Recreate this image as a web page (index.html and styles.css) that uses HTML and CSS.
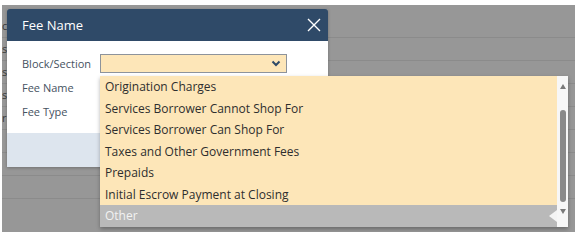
FILE: index.html
```html
<!DOCTYPE html>
<html lang="en">
<head>
    <meta charset="UTF-8">
    <title>Fee Name</title>
    <link rel="stylesheet" href="styles.css">
</head>
<body>
    <div class="screen">
        <!-- page behind the overlay -->
        <div class="page">
            <div class="pageRow"><span>c</span></div>
            <div class="pageRow"><span>s</span></div>
            <div class="pageRow"><span>s</span></div>
            <div class="pageRow"><span>s</span></div>
            <div class="pageRow"><span>r</span></div>
            <div class="pageRow"></div>
            <div class="pageRow"></div>
            <div class="pageRow"></div>
        </div>

        <div class="modal">
            <div class="modalHeader">
                <span class="modalTitle">Fee Name</span>
                <svg class="closeIcon" width="14" height="14" viewBox="0 0 14 14">
                    <path d="M1 1 L13 13 M13 1 L1 13" stroke="#ffffff" stroke-width="1.4" fill="none"/>
                </svg>
            </div>
            <div class="modalBody">
                <div class="formRow">
                    <label>Block/Section</label>
                    <div class="selectBox">
                        <svg width="10" height="7" viewBox="0 0 10 7">
                            <path d="M1.5 1.5 L5 5 L8.5 1.5" stroke="#2e4a68" stroke-width="2" fill="none"/>
                        </svg>
                    </div>
                </div>
                <div class="formRow"><label>Fee Name</label></div>
                <div class="formRow"><label>Fee Type</label></div>
            </div>
            <div class="modalFooter"></div>
        </div>

        <div class="dropdown">
            <ul class="optionList">
                <li>Origination Charges</li>
                <li>Services Borrower Cannot Shop For</li>
                <li>Services Borrower Can Shop For</li>
                <li>Taxes and Other Government Fees</li>
                <li>Prepaids</li>
                <li>Initial Escrow Payment at Closing</li>
                <li class="selected">Other<span class="notch"></span></li>
            </ul>
            <div class="scrollbar">
                <span class="arrowUp"></span>
                <span class="thumb"></span>
                <span class="arrowDown"></span>
            </div>
        </div>
    </div>
</body>
</html>
```

FILE: styles.css
```css
body {
    margin: 0;
    background-color: #ffffff;
    font-family: "Open Sans", Arial, sans-serif;
}
.screen {
    position: relative;
    margin: 5px 0 0 2px;
    width: 573px;
    height: 227px;
    background-color: #979797;
    overflow: hidden;
}
.page {
    display: flex;
    flex-direction: column;
    padding-top: 10px;
}
.pageRow {
    height: 22px;
    border-bottom: 1px solid #8b8b8b;
    font-size: 11px;
    color: #3a3a3a;
    line-height: 22px;
}
.modal {
    position: absolute;
    left: 5px;
    top: 4px;
    width: 321px;
    display: flex;
    flex-direction: column;
    box-shadow: 0 1px 3px rgba(0, 0, 0, 0.25);
}
.modalHeader {
    height: 32px;
    background-color: #2f4a68;
    border-radius: 3px 3px 0 0;
    display: flex;
    align-items: center;
    justify-content: space-between;
    padding: 0 7px 0 15px;
}
.modalTitle {
    color: #ffffff;
    font-size: 13px;
}
.modalBody {
    height: 92px;
    background-color: #ffffff;
    padding: 13px 0 0 15px;
    box-sizing: border-box;
    display: flex;
    flex-direction: column;
    gap: 5px;
}
.formRow {
    display: flex;
    align-items: center;
    height: 19px;
}
.formRow label {
    width: 78px;
    font-size: 11px;
    color: #46525f;
}
.selectBox {
    width: 187px;
    height: 19px;
    box-sizing: border-box;
    background-color: #fde6b8;
    border: 1px solid #8d939b;
    display: flex;
    align-items: center;
    justify-content: flex-end;
    padding-right: 5px;
}
.modalFooter {
    height: 34px;
    background-color: #dde5ee;
}
.dropdown {
    position: absolute;
    left: 98px;
    top: 71px;
    width: 468px;
    height: 151px;
    display: flex;
    box-shadow: 0 2px 4px rgba(0, 0, 0, 0.3);
}
.optionList {
    list-style-type: none;
    margin: 0;
    padding: 0;
    flex: 1;
    background-color: #fde6b8;
    display: flex;
    flex-direction: column;
}
.optionList li {
    position: relative;
    height: 21.5px;
    line-height: 21.5px;
    padding-left: 5px;
    font-size: 12px;
    color: #2e2e2e;
}
.optionList li.selected {
    background-color: #b9b9b9;
    color: #f2f2f2;
}
.notch {
    position: absolute;
    right: 0;
    top: 5px;
    width: 0;
    height: 0;
    border-top: 6px solid transparent;
    border-bottom: 6px solid transparent;
    border-right: 8px solid #f4f4f4;
}
.scrollbar {
    width: 11px;
    background-color: #f7f7f7;
    display: flex;
    flex-direction: column;
    align-items: center;
    padding: 8px 0 6px;
    box-sizing: border-box;
}
.arrowUp {
    width: 0;
    height: 0;
    border-left: 3.5px solid transparent;
    border-right: 3.5px solid transparent;
    border-bottom: 5px solid #7a7a7a;
}
.thumb {
    width: 6px;
    height: 92px;
    margin: 21px 0 7px;
    border-radius: 3px;
    background-color: #8a8a8a;
}
.arrowDown {
    width: 0;
    height: 0;
    border-left: 3.5px solid transparent;
    border-right: 3.5px solid transparent;
    border-top: 5px solid #7a7a7a;
}
```
